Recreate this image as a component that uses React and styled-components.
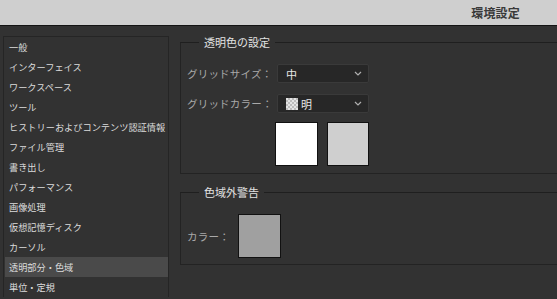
import React from 'react'
import styled, { createGlobalStyle } from 'styled-components'

const GlobalStyle = createGlobalStyle`
  html, body { margin: 0; padding: 0; background: #323232; }
  body { font-family: "Noto Sans CJK JP", "Noto Sans", sans-serif; }
  * { box-sizing: border-box; }
`

const Window = styled.div`
  width: 557px; height: 299px; overflow: hidden; background: #323232;
  display: flex; flex-direction: column;
`
const TitleBar = styled.div`
  height: 26px; flex: none; background: #cfcfcf; border-bottom: 1px solid #141414;
  display: flex; align-items: center; justify-content: flex-end; padding-right: 37px;
  font-size: 12px; font-weight: bold; color: #3a3a3a; letter-spacing: 0.2px;
`
const Body = styled.div`
  flex: 1; display: flex; min-height: 0;
`
const Sidebar = styled.ul`
  list-style: none; margin: 10px 0 0 3px; padding: 0 0 0 1px; width: 166px; flex: none;
  border: 1px solid #252525; border-bottom: none; align-self: flex-start;
`
const Item = styled.li`
  height: 20px; line-height: 20px; padding-left: 4px; font-size: 9.2px; color: #dcdcdc;
  white-space: nowrap; overflow: hidden;
  background: ${p => p.$active ? '#4a4a4a' : 'transparent'};
`
const Content = styled.div`
  flex: 1; display: flex; flex-direction: column; gap: 10px; padding: 8px 0 0 11px; min-width: 0;
`
const Group = styled.fieldset`
  margin: 0; width: calc(100% + 30px); border: 1px solid #232323; border-top-color: #1f1f1f;
  padding: ${p => p.$pad};
`
const Legend = styled.legend`
  margin-left: 12px; padding: 0 5px; font-size: 11px; line-height: 16px; color: #e2e2e2;
`
const FormGrid = styled.div`
  display: grid; grid-template-columns: 90px 92px; row-gap: 11px; align-items: center;
`
const Label = styled.span`
  font-size: 10.5px; color: #a9a9a9; white-space: nowrap; letter-spacing: 0.2px;
  padding-right: ${p => p.$gap || 0}px;
`
const Select = styled.div`
  height: 19px; background: #272727; border: 1px solid #3a3a3a; border-radius: 2px;
  display: flex; align-items: center; padding: 0 6px 0 8px; gap: 3px;
  font-size: 11px; color: #e6e6e6;
`
const SelectText = styled.span`
  flex: 1;
`
const Checker = styled.span`
  width: 12px; height: 12px; flex: none;
  background-color: #e4e4e4;
  background-image:
    linear-gradient(45deg, #bcbcbc 25%, transparent 25%, transparent 75%, #bcbcbc 75%),
    linear-gradient(45deg, #bcbcbc 25%, transparent 25%, transparent 75%, #bcbcbc 75%);
  background-size: 4px 4px; background-position: 0 0, 2px 2px;
`
const Swatches = styled.div`
  grid-column: 2; display: flex; gap: 9px; margin-left: -2px; margin-top: -2px;
`
const Swatch = styled.div`
  width: 43px; height: 44px; background: ${p => p.$color}; border: 1px solid #111;
`
const Row = styled.div`
  display: flex; align-items: center;
`

const Chevron = () => (
  <svg width="8" height="5" viewBox="0 0 8 5">
    <polyline points="1,1 4,4 7,1" fill="none" stroke="#b0b0b0" strokeWidth="1.2" />
  </svg>
)

const items = [
  '一般', 'インターフェイス', 'ワークスペース', 'ツール', 'ヒストリーおよびコンテンツ認証情報',
  'ファイル管理', '書き出し', 'パフォーマンス', '画像処理', '仮想記憶ディスク', 'カーソル',
  '透明部分・色域', '単位・定規',
]

export default function App() {
  return (
    <>
      <GlobalStyle />
      <Window>
        <TitleBar>環境設定</TitleBar>
        <Body>
          <Sidebar>
            {items.map(t => <Item key={t} $active={t === '透明部分・色域'}>{t}</Item>)}
          </Sidebar>
          <Content>
            <Group $pad="14px 0 7px 6px">
              <Legend>透明色の設定</Legend>
              <FormGrid>
                <Label>グリッドサイズ：</Label>
                <Select><SelectText>中</SelectText><Chevron /></Select>
                <Label>グリッドカラー：</Label>
                <Select><Checker /><SelectText>明</SelectText><Chevron /></Select>
                <Swatches>
                  <Swatch $color="#ffffff" />
                  <Swatch $color="#cfcfcf" />
                </Swatches>
              </FormGrid>
            </Group>
            <Group $pad="14px 0 6px 6px">
              <Legend>色域外警告</Legend>
              <Row>
                <Label $gap={8}>カラー：</Label>
                <Swatch $color="#a0a0a0" />
              </Row>
            </Group>
          </Content>
        </Body>
      </Window>
    </>
  )
}
